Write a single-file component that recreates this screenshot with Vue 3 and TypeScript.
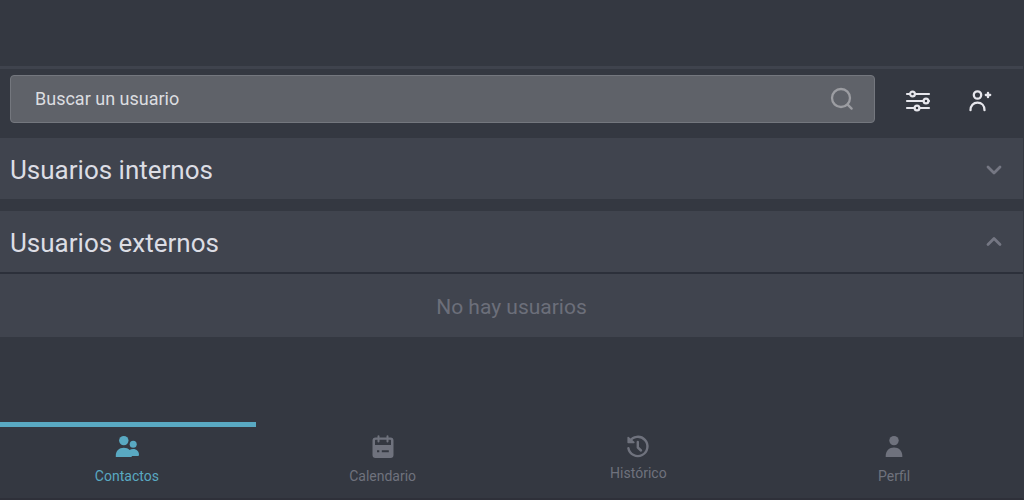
<script setup lang="ts">
import { ref } from 'vue'

type TabId = 'contactos' | 'calendario' | 'historico' | 'perfil'

interface Tab {
  id: TabId
  label: string
}

interface Group {
  id: string
  title: string
  open: boolean
}

const query = ref('')
const active = ref<TabId>('contactos')

const groups = ref<Group[]>([
  { id: 'internos', title: 'Usuarios internos', open: false },
  { id: 'externos', title: 'Usuarios externos', open: true },
])

const tabs: Tab[] = [
  { id: 'contactos', label: 'Contactos' },
  { id: 'calendario', label: 'Calendario' },
  { id: 'historico', label: 'Histórico' },
  { id: 'perfil', label: 'Perfil' },
]
</script>

<template>
  <div class="screen">
    <header class="topbar"></header>

    <div class="tools">
      <label class="search">
        <input v-model="query" type="text" placeholder="Buscar un usuario" aria-label="Buscar un usuario" />
        <svg width="24" height="24" viewBox="0 0 24 24" fill="none" stroke="currentColor" stroke-width="2.300" stroke-linecap="round" aria-hidden="true">
          <circle cx="11" cy="11" r="9" />
          <path d="M17.600 17.600L21.600 21.600" />
        </svg>
      </label>
      <button type="button" class="tool" aria-label="Filtros">
        <svg width="26" height="24" viewBox="0 0 26 24" fill="none" stroke="currentColor" stroke-width="2.200" stroke-linecap="round" aria-hidden="true">
          <path d="M2 5H5M10 5H24M2 12H18.500M23.500 12H24M2 19H9.500M14.500 19H24" />
          <circle cx="7.500" cy="5" r="2.400" />
          <circle cx="21" cy="12" r="2.400" />
          <circle cx="12" cy="19" r="2.400" />
        </svg>
      </button>
      <button type="button" class="tool" aria-label="Añadir usuario">
        <svg width="26" height="24" viewBox="0 0 26 24" fill="none" stroke="currentColor" stroke-width="2.300" stroke-linecap="round" aria-hidden="true">
          <circle cx="10.500" cy="6" r="3.700" />
          <path d="M3.500 21.200C3.500 16.600 6.300 13.700 10.500 13.700S17.500 16.600 17.500 21.200" />
          <path d="M21 3.800V8.200M18.800 6H23.200" />
        </svg>
      </button>
    </div>

    <main class="groups">
      <section v-for="group in groups" :key="group.id" class="group">
        <h2>
          <button type="button" class="toggle" :aria-expanded="group.open" @click="group.open = !group.open">
            <span>{{ group.title }}</span>
            <svg width="18" height="18" viewBox="0 0 18 18" fill="none" stroke="currentColor" stroke-width="2.800" stroke-linecap="round" stroke-linejoin="round" aria-hidden="true">
              <path v-if="group.open" d="M3 10.500L9 4.500L15 10.500" />
              <path v-else d="M3 6L9 12L15 6" />
            </svg>
          </button>
        </h2>
        <p v-if="group.open" class="empty">No hay usuarios</p>
      </section>
    </main>

    <nav class="tabs">
      <button
        v-for="tab in tabs"
        :key="tab.id"
        type="button"
        class="tab"
        :class="{ active: tab.id === active, compact: tab.id === 'historico' }"
        :aria-current="tab.id === active ? 'page' : undefined"
        @click="active = tab.id"
      >
        <svg v-if="tab.id === 'contactos'" width="26" height="26" viewBox="0 0 26 26" fill="currentColor" aria-hidden="true">
          <circle cx="9.800" cy="6.600" r="4.700" />
          <circle cx="19.200" cy="10.200" r="3.500" />
          <path d="M1.800 23V21.500C1.800 17 5 13.700 9.800 13.700C12.200 13.700 14.200 14.500 15.600 15.900C16.600 15.200 17.800 14.900 19.200 14.900C22.800 14.900 25 17.400 25 20.500C25 21.500 24.500 22 23.600 22H17.700V23Z" />
        </svg>
        <svg v-else-if="tab.id === 'calendario'" width="26" height="26" viewBox="0 0 26 26" aria-hidden="true">
          <path fill="currentColor" fill-rule="evenodd" d="M5.500 3.500H20.500Q23.500 3.500 23.500 6.500V21Q23.500 24 20.500 24H5.500Q2.500 24 2.500 21V6.500Q2.500 3.500 5.500 3.500ZM5 6.500V11H21V6.500Q21 5.800 20.300 5.800H5.700Q5 5.800 5 6.500ZM7 16.200V18.200H9.300V16.200ZM11.800 16.200V18.200H18.800V16.200Z" />
          <path d="M8.500 2.300V7.500M17.500 2.300V7.500" stroke="currentColor" stroke-width="2" stroke-linecap="round" />
        </svg>
        <svg v-else-if="tab.id === 'historico'" width="26" height="26" viewBox="0 0 26 26" fill="none" stroke="currentColor" stroke-width="2.400" stroke-linecap="round" stroke-linejoin="round" aria-hidden="true">
          <path d="M4.600 7.500A9.600 9.600 0 1 1 3.400 14.200" />
          <path d="M3.200 3.500V8.400H8.800Z" fill="currentColor" stroke-width="1.600" />
          <path d="M12.800 8V13.500L16 16.500" />
        </svg>
        <svg v-else width="26" height="26" viewBox="0 0 26 26" fill="currentColor" aria-hidden="true">
          <circle cx="13" cy="6.600" r="4.700" />
          <path d="M4.700 23V21.800C4.700 17 8.200 13.500 13 13.500S21.300 17 21.300 21.800V23Z" />
        </svg>
        <span>{{ tab.label }}</span>
      </button>
    </nav>
  </div>
</template>

<style>
body {
  margin: 0;
  background: #343740;
}
</style>

<style scoped>
.screen {
  box-sizing: border-box;
  display: flex;
  flex-direction: column;
  min-height: 100vh;
  background: #343841;
  border-right: 1px solid #343841;
  border-bottom: 2px solid #2e3039;
  color: #dcdde4;
  font-family: Roboto, "Liberation Sans", sans-serif;
}

button {
  margin: 0;
  padding: 0;
  border: 0;
  background: none;
  color: inherit;
  font: inherit;
  cursor: pointer;
}

svg {
  display: block;
  flex: none;
}

.topbar {
  height: 66px;
  border-bottom: 3px solid #3f434d;
}

.tools {
  display: flex;
  align-items: center;
  gap: 12px;
  padding: 6px 18px 15px 10px;
}

.search {
  flex: 1;
  box-sizing: border-box;
  display: flex;
  align-items: center;
  height: 48px;
  margin-right: 6px;
  padding: 0 20px 0 24px;
  border: 1px solid #74777e;
  border-radius: 4px;
  background: #5f6269;
  color: #9c9da2;
}

.search input {
  flex: 1;
  min-width: 0;
  padding: 0;
  border: 0;
  outline: 0;
  background: transparent;
  color: #dcdde0;
  font: 18px/24px Roboto, "Liberation Sans", sans-serif;
}

.search input::placeholder {
  color: #dcdde0;
  opacity: 1;
}

.tool {
  display: grid;
  place-items: center;
  box-sizing: border-box;
  width: 50px;
  height: 44px;
  padding-top: 4px;
  color: #e6e6ec;
}

.groups {
  display: flex;
  flex-direction: column;
  gap: 12px;
}

.group {
  background: #40444e;
}

h2 {
  margin: 0;
  font-size: 26px;
  font-weight: 400;
  line-height: 32px;
}

.toggle {
  display: flex;
  align-items: center;
  justify-content: space-between;
  width: 100%;
  height: 61px;
  padding: 3px 20px 0 10px;
  box-sizing: border-box;
  text-align: left;
}

.toggle svg {
  color: #757783;
}

.empty {
  margin: 0;
  padding: 19px 0 16px;
  border-top: 2px solid #2c303a;
  color: #6c6f7a;
  font-size: 21px;
  line-height: 28px;
  text-align: center;
}

.tabs {
  display: grid;
  grid-template-columns: repeat(4, 1fr);
  margin-top: auto;
}

.tab {
  display: flex;
  flex-direction: column;
  align-items: center;
  gap: 7px;
  box-sizing: border-box;
  height: 76px;
  padding: 7px 2px 0 0;
  border-top: 5px solid transparent;
  color: #6f727d;
  font-size: 14px;
  line-height: 18px;
}

.tab.compact {
  gap: 4px;
}

.tab.active {
  border-top-color: #59a9c2;
  color: #59a9c2;
}
</style>
